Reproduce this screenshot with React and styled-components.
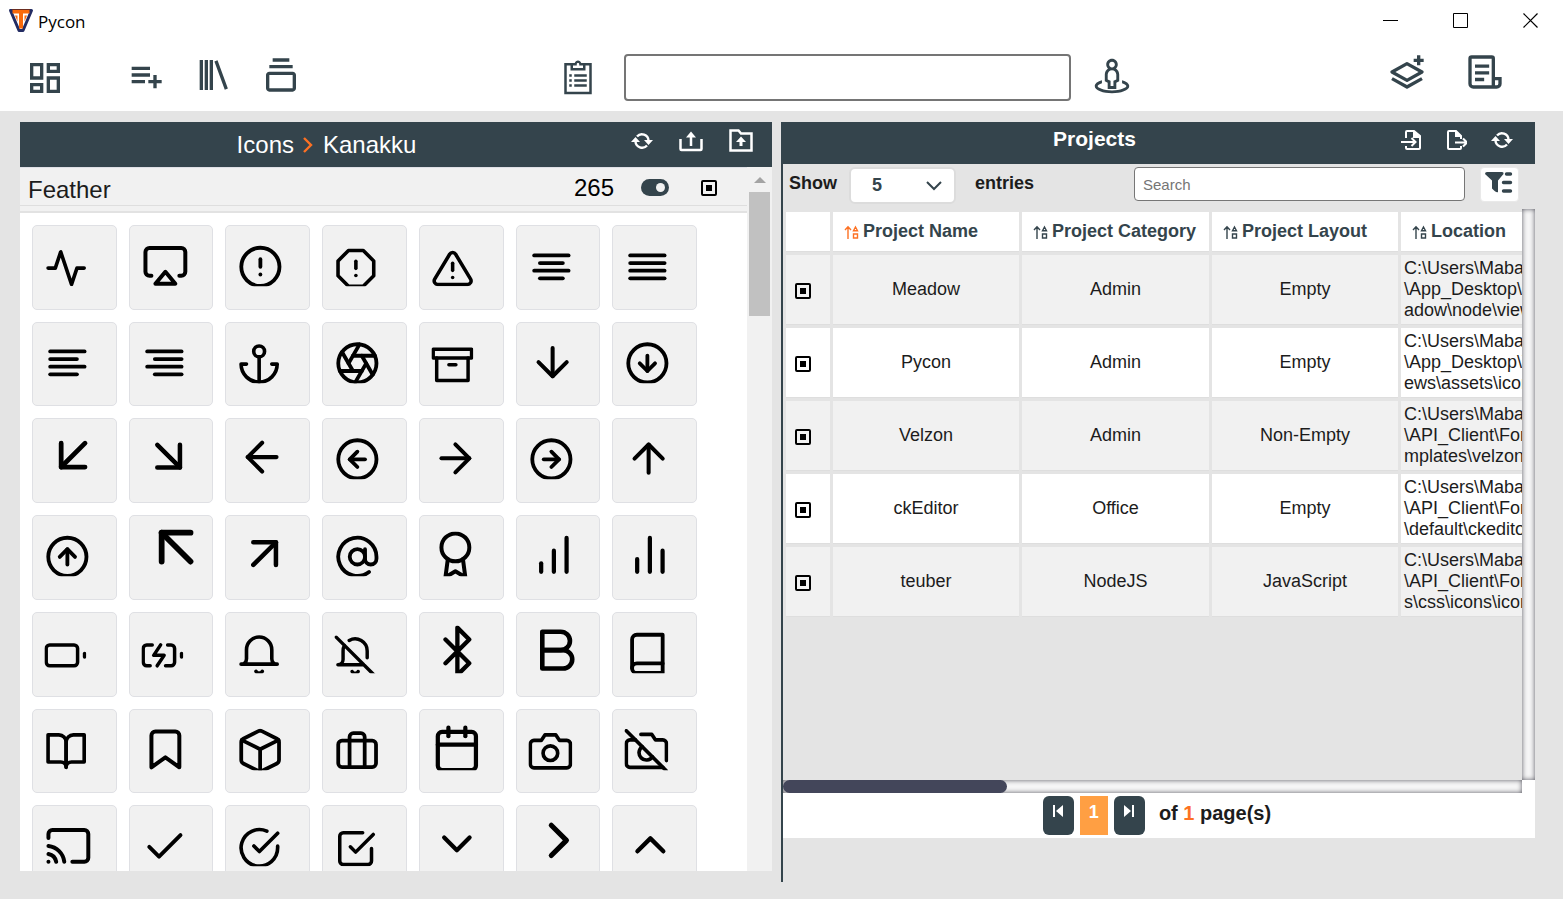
import React from "react";
import styled, { createGlobalStyle } from "styled-components";
import {
  FiActivity, FiAirplay, FiAlertCircle, FiAlertOctagon, FiAlertTriangle, FiAlignCenter, FiAlignJustify,
  FiAlignLeft, FiAlignRight, FiAnchor, FiAperture, FiArchive, FiArrowDown, FiArrowDownCircle,
  FiArrowDownLeft, FiArrowDownRight, FiArrowLeft, FiArrowLeftCircle, FiArrowRight, FiArrowRightCircle, FiArrowUp,
  FiArrowUpCircle, FiArrowUpLeft, FiArrowUpRight, FiAtSign, FiAward, FiBarChart, FiBarChart2,
  FiBattery, FiBatteryCharging, FiBluetooth, FiBold, FiBook,
  FiBookOpen, FiBookmark, FiBriefcase, FiCalendar, FiCamera, FiCameraOff,
  FiCast, FiCheck, FiCheckCircle, FiCheckSquare, FiChevronDown, FiChevronRight, FiChevronUp,
} from "react-icons/fi";
import { BiListPlus, BiLibrary, BiCollection, BiLayerPlus } from "react-icons/bi";
import { MdOutlineDashboard } from "react-icons/md";
import { LiaClipboardListSolid, LiaStreetViewSolid } from "react-icons/lia";

const slate = "#34444c";
const page = "#e4e4e4";
const orange = "#fd7123";

const GlobalStyle = createGlobalStyle`
  *, *::before, *::after { box-sizing: border-box; }
  body {
    margin: 0;
    background: ${page};
    color: #1c1c1c;
    font-family: "Liberation Sans", Arial, sans-serif;
    font-size: 18px;
    line-height: 21px;
  }
  button, input, select { font: inherit; color: inherit; }
  svg { display: block; flex: none; }
`;

const Window = styled.div`
  display: flex;
  flex-direction: column;
  height: 100vh;
  min-width: 1200px;
  min-height: 600px;
  overflow: hidden;
`;

const TitleBar = styled.header`
  display: flex;
  align-items: center;
  height: 42px;
  padding: 0 24px 0 8px;
  gap: 4px;
  background: #fff;
`;

const AppName = styled.span`
  flex: 1;
  font-family: "Open Sans", "Noto Sans", sans-serif;
  font-size: 17px;
  color: #000;
`;

const WindowControls = styled.div`
  display: flex;
  gap: 54px;
`;

const PlainButton = styled.button`
  display: flex;
  padding: 0;
  border: 0;
  background: none;
  color: ${(p) => p.$color || "inherit"};
  cursor: pointer;
`;

const Toolbar = styled.nav`
  display: flex;
  justify-content: space-between;
  align-items: center;
  padding: 10px 58px 8px 25px;
  background: #fff;
  color: ${slate};
`;

const ToolGroup = styled.div`
  display: flex;
  align-items: center;
  gap: ${(p) => p.$gap}px;
  margin-left: ${(p) => p.$indent || 0}px;
  padding-bottom: ${(p) => p.$lift || 0}px;
`;

const CommandInput = styled.input`
  width: 447px;
  height: 47px;
  padding: 0 12px;
  border: 2px solid #757575;
  border-radius: 4px;
  background: #fff;
`;

const Main = styled.main`
  flex: 1;
  min-height: 0;
  display: flex;
  gap: 9px;
  padding: 11px 28px 17px 20px;
`;

const IconsPanel = styled.section`
  flex: 1;
  min-width: 0;
  display: flex;
  flex-direction: column;
  margin-bottom: 11px;
  background: #fff;
`;

const ProjectsPanel = styled.section`
  flex: 1;
  min-width: 0;
  display: flex;
  flex-direction: column;
  padding-bottom: 44px;
  border-left: 2px solid ${slate};
`;

const PanelHeader = styled.div`
  display: flex;
  align-items: flex-start;
  height: ${(p) => p.$height}px;
  padding: 8px ${(p) => p.$right}px 0 ${(p) => p.$left}px;
  background: ${slate};
  color: #fff;
`;

const Breadcrumb = styled.h2`
  flex: 1;
  display: flex;
  justify-content: center;
  align-items: center;
  gap: 8px;
  margin: 0;
  font-size: 24px;
  line-height: 30px;
  font-weight: 400;
`;

const ProjectsTitle = styled.h2`
  flex: 1;
  margin: 0;
  font-size: 21px;
  line-height: 18px;
  text-align: center;
`;

const HeaderActions = styled.div`
  display: flex;
  align-items: center;
  height: ${(p) => p.$height}px;
  gap: ${(p) => p.$gap}px;
`;

const IconsBody = styled.div`
  flex: 1;
  min-height: 0;
  display: flex;
`;

const IconsContent = styled.div`
  flex: 1;
  min-width: 0;
  overflow: hidden;
`;

const SetHeader = styled.div`
  padding-bottom: 5px;
  border-bottom: 2px solid #e2e2e2;
  background: #f1f1f1;
`;

const SetRow = styled.div`
  display: flex;
  align-items: center;
  height: 39px;
  padding: 2px 30px 0 8px;
  border-top: 1px solid #dfe0e6;
  border-bottom: 1px solid #dedede;
  font-size: 24px;
  line-height: 30px;
`;

const SetName = styled.h3`
  flex: 1;
  margin: 0;
  padding-top: 4px;
  font-size: 24px;
  line-height: 30px;
  font-weight: 400;
`;

const SetCount = styled.span`
  margin-right: 27px;
  color: #000;
`;

const Toggle = styled.input`
  appearance: none;
  display: flex;
  align-items: center;
  justify-content: ${(p) => (p.checked || p.defaultChecked ? "flex-end" : "flex-start")};
  width: 28px;
  height: 17px;
  margin: 0 32px 0 0;
  padding: 0 4px;
  border-radius: 9px;
  background: ${slate};
  &::before {
    content: "";
    width: 9px;
    height: 9px;
    border-radius: 50%;
    background: #f1f1f1;
  }
`;

const StopBox = styled.input`
  appearance: none;
  display: grid;
  place-items: center;
  width: 16px;
  height: 16px;
  margin: 0;
  border: 2px solid #000;
  border-radius: 2px;
  &::before {
    content: "";
    width: 6px;
    height: 6px;
    background: #000;
  }
`;

const TileGrid = styled.div`
  display: grid;
  grid-template-columns: repeat(auto-fill, minmax(80px, 1fr));
  gap: 12px;
  padding: 12px 50px 12px 12px;
`;

const Tile = styled.button`
  aspect-ratio: 1;
  padding: 0;
  border: 1px solid #dfe0e4;
  border-radius: 5px;
  background: #f1f1f1;
  color: #000;
  overflow: hidden;
`;

const Gutter = styled.div`
  display: flex;
  flex-direction: column;
  align-items: center;
  gap: 9px;
  width: 25px;
  padding-top: 10px;
  background: #f1f1f1;
`;

const GutterThumb = styled.div`
  width: 21px;
  height: 124px;
  background: #c1c1c1;
`;

const Controls = styled.form`
  display: flex;
  align-items: flex-start;
  height: 45px;
  padding: 3px 16px 0 6px;
`;

const ControlLabel = styled.label`
  margin-right: ${(p) => p.$after}px;
  padding-top: 6px;
  font-weight: 700;
`;

const SelectWrap = styled.div`
  display: grid;
  align-items: center;
  margin-right: 19px;
  color: ${slate};
  & > * { grid-area: 1 / 1; }
  & > svg { justify-self: end; margin-right: 14px; pointer-events: none; }
`;

const EntriesSelect = styled.select`
  appearance: none;
  width: 107px;
  height: 37px;
  padding: 0 36px 1px 21px;
  border: 2px solid #dcdcdc;
  border-radius: 6px;
  background: #fff;
  font-weight: 700;
`;

const SearchInput = styled.input`
  width: 331px;
  height: 34px;
  margin: 0 15px 0 auto;
  padding: 0 8px;
  border: 1px solid #767676;
  border-radius: 4px;
  background: #fff;
  font-size: 15px;
  &::placeholder { color: #757575; opacity: 1; }
`;

const FilterButton = styled.button`
  width: 39px;
  height: 35px;
  padding: 0 4px 4px;
  border: 1px solid #e9e9e9;
  border-radius: 4px;
  background: #fff;
  color: ${slate};
`;

const TableFrame = styled.div`
  flex: 1;
  min-height: 0;
  display: grid;
  grid-template: minmax(0, 1fr) 13px / minmax(0, 1fr) 13px;
  background: #fff;
`;

const TableView = styled.div`
  overflow: hidden;
  background: ${page};
`;

const Track = styled.div`
  background: #f6f6f6;
  box-shadow: inset 0 0 5px #55555f;
`;

const TrackThumb = styled.div`
  width: 30.3%;
  height: 13px;
  border-radius: 7px;
  background: #43465a;
`;

const Table = styled.table`
  table-layout: fixed;
  width: 942px;
  border-spacing: 3px;
`;

const Col = styled.col`
  width: ${(p) => p.$width}px;
`;

const HeadCell = styled.th`
  height: 40px;
  padding: 0 0 0 11px;
  border-bottom: 1px solid #dedede;
  background: #fff;
  color: ${slate};
  text-align: left;
`;

const SortButton = styled(PlainButton)`
  align-items: center;
  gap: 4px;
  font-weight: 700;
  white-space: nowrap;
  & > svg { color: ${(p) => (p.$active ? orange : slate)}; }
`;

const Row = styled.tr`
  background: ${(p) => (p.$striped ? "#f1f1f1" : "#fff")};
`;

const Cell = styled.td`
  height: 70px;
  padding: ${(p) => (p.$path ? "0 3px" : "0")};
  border-bottom: 1px solid #dedede;
  text-align: ${(p) => (p.$path ? "left" : "center")};
  white-space: pre;
`;

const SelectCell = styled(Cell)`
  padding: 2px 0 0 9px;
`;

const Pager = styled.footer`
  display: flex;
  justify-content: center;
  gap: 6px;
  padding: 3px 4px 3px 0;
  background: #fff;
`;

const PagerButton = styled.button`
  display: flex;
  justify-content: center;
  width: ${(p) => (p.$current ? 28 : 31)}px;
  height: 39px;
  padding: ${(p) => (p.$current ? 6 : 9)}px 0 0;
  border: 0;
  border-radius: ${(p) => (p.$current ? 0 : 6)}px;
  background: ${(p) => (p.$current ? "#ff9f43" : slate)};
  color: #fff;
  font-weight: 700;
`;

const PageTotal = styled.span`
  margin-left: 8px;
  font-size: 20px;
  line-height: 34px;
  font-weight: 700;
  & > b { color: ${orange}; }
`;

const featherStroke = {
  viewBox: "0 0 24 24", fill: "none", stroke: "currentColor",
  strokeWidth: 2, strokeLinecap: "round", strokeLinejoin: "round",
};

const Bell = ({ size, ...rest }) => (
  <svg {...featherStroke} width={size} height={size} {...rest}>
    <path d="M22 17H2a3 3 0 0 0 3-3V9a7 7 0 0 1 14 0v5a3 3 0 0 0 3 3zm-8.27 4a2 2 0 0 1-3.46 0" />
  </svg>
);

const BellOff = ({ size, ...rest }) => (
  <svg {...featherStroke} width={size} height={size} {...rest}>
    <path d="M8.56 2.9A7 7 0 0 1 19 9v4m-2 4H2a3 3 0 0 0 3-3V9a7 7 0 0 1 .78-3.22M13.73 21a2 2 0 0 1-3.46 0M1 1l22 22" />
  </svg>
);

const Cube = ({ size, ...rest }) => (
  <svg {...featherStroke} width={size} height={size} {...rest}>
    <path d="M12.89 1.45l8 4A2 2 0 0 1 22 7.24v9.53a2 2 0 0 1-1.11 1.79l-8 4a2 2 0 0 1-1.79 0l-8-4a2 2 0 0 1-1.1-1.8V7.24a2 2 0 0 1 1.11-1.79l8-4a2 2 0 0 1 1.78 0z" />
    <path d="M2.32 6.16L12 11l9.68-4.84M12 22.76V11" />
  </svg>
);

// Each entry: accessible name, glyph, glyph size, distance of the glyph box from the tile top.
const tiles = [
  ["activity", FiActivity, 43.5, 20.5], ["airplay", FiAirplay, 48, 16], ["alert circle", FiAlertCircle, 46, 18],
  ["alert octagon", FiAlertOctagon, 43, 21], ["alert triangle", FiAlertTriangle, 42.5, 21.5],
  ["align center", FiAlignCenter, 46, 18], ["align justify", FiAlignJustify, 46, 18],
  ["align left", FiAlignLeft, 46, 17], ["align right", FiAlignRight, 46, 17], ["anchor", FiAnchor, 43.5, 19.5],
  ["aperture", FiAperture, 46, 17.5], ["archive", FiArchive, 42, 21], ["arrow down", FiArrowDown, 48.5, 15],
  ["arrow down circle", FiArrowDownCircle, 46, 17.5],
  ["arrow down left", FiArrowDownLeft, 57.5, 7.5], ["arrow down right", FiArrowDownRight, 54.5, 10],
  ["arrow left", FiArrowLeft, 49.5, 13.5], ["arrow left circle", FiArrowLeftCircle, 46, 17.5],
  ["arrow right", FiArrowRight, 48, 15.5], ["arrow right circle", FiArrowRightCircle, 46, 17.5],
  ["arrow up", FiArrowUp, 48.5, 15.5],
  ["arrow up circle", FiArrowUpCircle, 46, 18], ["arrow up left", FiArrowUpLeft, 69.5, -3.5],
  ["arrow up right", FiArrowUpRight, 54.5, 10.5], ["at sign", FiAtSign, 46, 18], ["award", FiAward, 48, 15.5],
  ["bar chart", FiBarChart, 51, 13.5], ["bar chart 2", FiBarChart2, 51, 13.5],
  ["battery", FiBattery, 42, 21.5], ["battery charging", FiBatteryCharging, 42, 21.5], ["bell", Bell, 43.5, 20.5],
  ["bell off", BellOff, 41.5, 22.5], ["bluetooth", FiBluetooth, 52, 12.5], ["bold", FiBold, 55.5, 9.5],
  ["book", FiBook, 46, 18],
  ["book open", FiBookOpen, 43.5, 19.5], ["bookmark", FiBookmark, 48, 15.5], ["box", Cube, 45.5, 18.5],
  ["briefcase", FiBriefcase, 45.5, 17.5], ["calendar", FiCalendar, 51, 13.5], ["camera", FiCamera, 44, 19.5],
  ["camera off", FiCameraOff, 44, 19],
  ["cast", FiCast, 48, 16], ["check", FiCheck, 47, 17.5], ["check circle", FiCheckCircle, 44, 20],
  ["check square", FiCheckSquare, 42.5, 21.5], ["chevron down", FiChevronDown, 51, 12.5],
  ["chevron right", FiChevronRight, 61, 4], ["chevron up", FiChevronUp, 52, 13],
];

// The glyph line box ends 61 units down the tile and cuts whatever reaches below it.
const GlyphTile = ({ name, Glyph, size, top }) => (
  <Tile type="button" aria-label={name}>
    <svg viewBox="0 0 83 83" width="100%" height="100%">
      <svg width="83" height="60.5" overflow="hidden">
        <Glyph x={11.5} y={top} size={size} />
      </svg>
    </svg>
  </Tile>
);

const Logo = () => (
  <svg width="26" height="26" viewBox="0 0 26 26">
    <path d="M2.500 2.500h21l-8.500 20h-4z" fill="#fff" stroke="#232c63" strokeWidth="3" strokeLinejoin="round" />
    <path d="M4.500 1.500h17v4H15v15h-4v-15H4.500z" fill="#f96a0c" />
    <path d="M7 7.500h2.500v6zM19 7.500h-2.500v6z" fill="#f96a0c" />
    <path d="M4 1.500h18" stroke="#6b2d20" strokeWidth="1" />
  </svg>
);

const Minimize = () => (
  <svg width="16" height="16"><path d="M0 7.500h15" stroke="#000" /></svg>
);
const Maximize = () => (
  <svg width="16" height="16"><path d="M.5 .5h14v14H.5z" stroke="#000" fill="none" /></svg>
);
const Close = () => (
  <svg width="16" height="16"><path d="M.5 .5l14 14M14.500 .5l-14 14" stroke="#000" strokeWidth="1.200" /></svg>
);

const Sync = () => (
  <svg width="22" height="18" viewBox="0 0 22 18">
    <path d="M4.500 9.500a6.600 6.600 0 0 0 11.500 4M17.500 8.500a6.600 6.600 0 0 0-11.500-4" fill="none" stroke="currentColor" strokeWidth="2.400" />
    <path d="M0 10l4.500-5L9 10zM13 8h9l-4.500 5z" fill="currentColor" />
  </svg>
);

const ScrollSheet = () => (
  <svg width="40" height="40" viewBox="0 0 24 24" fill="none" stroke="currentColor" strokeWidth="2">
    <path d="M17 20.500V4a1 1 0 0 0-1-1H4a1 1 0 0 0-1 1v15a2 2 0 0 0 2 2h14a2 2 0 0 0 2-2v-3h-4" />
    <path d="M6 8.500h8.500M6 12.500h8.500M6 16.500h5.500" />
  </svg>
);

const UploadTray = () => (
  <svg width="24" height="22" viewBox="0 0 24 22">
    <path d="M1.500 9v10a1 1 0 0 0 1 1h19a1 1 0 0 0 1-1V9M12 16V6" fill="none" stroke="currentColor" strokeWidth="2.500" />
    <path d="M12 1.500l5 6H7z" fill="currentColor" />
  </svg>
);

const FolderUp = () => (
  <svg width="24" height="24" viewBox="0 0 24 24">
    <path d="M1.500 1.500h8l2.500 3h10.500v17h-21z" fill="none" stroke="currentColor" strokeWidth="2.500" />
    <path d="M12 7.500l5 5.500h-3.500v4h-3v-4H7z" fill="currentColor" />
  </svg>
);

const FileImport = () => (
  <svg width="20" height="20" viewBox="0 0 20 20" fill="none" stroke="currentColor" strokeWidth="2">
    <path d="M5 8V2a1 1 0 0 1 1-1h7l6 5v12a1 1 0 0 1-1 1H6a1 1 0 0 1-1-1v-2" />
    <path d="M13 1v6h6" fill="currentColor" />
    <path d="M0 12h14M10.500 8l4 4-4 4" />
  </svg>
);

const FileExport = () => (
  <svg width="22" height="20" viewBox="0 0 22 20" fill="none" stroke="currentColor" strokeWidth="2">
    <path d="M16 9V6l-5-5H4a1 1 0 0 0-1 1v16a1 1 0 0 0 1 1h11a1 1 0 0 0 1-1v-2" />
    <path d="M11 1v5h5" fill="currentColor" />
    <path d="M10 12.500h11M18 8.500l4 4-4 4" />
  </svg>
);

const FilterList = () => (
  <svg width="28" height="24" viewBox="0 0 28 24">
    <path d="M0 3q0-2 2-2h15q2 0 1.500 2l-5.500 6.500V21q-2 1-6-3.500V9.500z" fill="currentColor" />
    <path d="M21.500 3h4M18.500 11.500h7M18.500 20h7" stroke="currentColor" strokeWidth="3.400" strokeLinecap="round" />
  </svg>
);

const SortShapes = () => (
  <svg width="15" height="15" viewBox="0 0 15 15" fill="none" stroke="currentColor" strokeWidth="1.400">
    <path d="M4 15V3M1 6l3-3.200L7 6M9.500 10h4v4h-4zM11.500 3l2 3.700h-4z" />
  </svg>
);

const SkipStart = () => (
  <svg width="12" height="12" viewBox="0 0 12 12"><path d="M1 0h2v12H1zM11 0v12L4 6z" fill="currentColor" /></svg>
);
const SkipEnd = () => (
  <svg width="12" height="12" viewBox="0 0 12 12"><path d="M9 0h2v12H9zM1 0v12l7-6z" fill="currentColor" /></svg>
);

const columns = [
  { title: "Project Name", width: 186, active: true },
  { title: "Project Category", width: 187 },
  { title: "Project Layout", width: 186 },
  { title: "Location", width: 321 },
];

const projects = [
  ["Meadow", "Admin", "Empty", "C:\\Users\\Maba\n\\App_Desktop\\Me\nadow\\node\\views"],
  ["Pycon", "Admin", "Empty", "C:\\Users\\Maba\n\\App_Desktop\\Vi\news\\assets\\icons"],
  ["Velzon", "Admin", "Non-Empty", "C:\\Users\\Maba\n\\API_Client\\Form\nmplates\\velzon"],
  ["ckEditor", "Office", "Empty", "C:\\Users\\Maba\n\\API_Client\\Form\n\\default\\ckeditor"],
  ["teuber", "NodeJS", "JavaScript", "C:\\Users\\Maba\n\\API_Client\\Form\ns\\css\\icons\\icons"],
];

const ProjectTable = () => (
  <Table>
    <colgroup>
      <Col $width={44} />
      {columns.map((c) => <Col key={c.title} $width={c.width} />)}
    </colgroup>
    <thead>
      <tr>
        <HeadCell aria-label="Selected" />
        {columns.map((c) => (
          <HeadCell key={c.title}>
            <SortButton type="button" $active={c.active}><SortShapes />{c.title}</SortButton>
          </HeadCell>
        ))}
      </tr>
    </thead>
    <tbody>
      {projects.map(([name, category, layout, location], i) => (
        <Row key={name} $striped={i % 2 === 0}>
          <SelectCell><StopBox type="checkbox" aria-label={`Select ${name}`} /></SelectCell>
          <Cell>{name}</Cell>
          <Cell>{category}</Cell>
          <Cell>{layout}</Cell>
          <Cell $path>{location}</Cell>
        </Row>
      ))}
    </tbody>
  </Table>
);

export default function App() {
  return (
    <Window>
      <GlobalStyle />
      <TitleBar>
        <Logo />
        <AppName>Pycon</AppName>
        <WindowControls>
          <PlainButton aria-label="Minimize"><Minimize /></PlainButton>
          <PlainButton aria-label="Maximize"><Maximize /></PlainButton>
          <PlainButton aria-label="Close"><Close /></PlainButton>
        </WindowControls>
      </TitleBar>

      <Toolbar>
        <ToolGroup $gap={60}>
          <PlainButton aria-label="Dashboard"><MdOutlineDashboard size={40} /></PlainButton>
          <ToolGroup $gap={28} $lift={5}>
            <PlainButton aria-label="Add to list"><BiListPlus size={40} /></PlainButton>
            <PlainButton aria-label="Library"><BiLibrary size={40} /></PlainButton>
            <PlainButton aria-label="Collection"><BiCollection size={40} /></PlainButton>
          </ToolGroup>
        </ToolGroup>
        <ToolGroup $gap={26} $indent={4}>
          <PlainButton aria-label="Clipboard"><LiaClipboardListSolid size={40} /></PlainButton>
          <ToolGroup $gap={18}>
            <CommandInput aria-label="Command" />
            <ToolGroup $lift={4}>
              <PlainButton aria-label="Street view"><LiaStreetViewSolid size={46} /></PlainButton>
            </ToolGroup>
          </ToolGroup>
        </ToolGroup>
        <ToolGroup $gap={38} $lift={11}>
          <PlainButton aria-label="Add layer"><BiLayerPlus size={40} /></PlainButton>
          <PlainButton aria-label="Script"><ScrollSheet /></PlainButton>
        </ToolGroup>
      </Toolbar>

      <Main>
        <IconsPanel>
          <PanelHeader $height={45} $left={2} $right={19}>
            <Breadcrumb>
              <span>Icons</span>
              <svg width="13" height="16" viewBox="0 0 13 16" fill="none" stroke={orange} strokeWidth="2.400">
                <path d="M2 1l7 7-7 7" />
              </svg>
              <span>Kanakku</span>
            </Breadcrumb>
            <HeaderActions $gap={26} $height={22}>
              <PlainButton aria-label="Refresh icons"><Sync /></PlainButton>
              <PlainButton aria-label="Upload icon"><UploadTray /></PlainButton>
              <PlainButton aria-label="Upload folder"><FolderUp /></PlainButton>
            </HeaderActions>
          </PanelHeader>
          <IconsBody>
            <IconsContent>
              <SetHeader>
                <SetRow>
                  <SetName>Feather</SetName>
                  <SetCount>265</SetCount>
                  <Toggle type="checkbox" role="switch" aria-label="Show set" defaultChecked />
                  <StopBox type="checkbox" aria-label="Select set" />
                </SetRow>
              </SetHeader>
              <TileGrid>
                {tiles.map(([name, Glyph, size, top]) => (
                  <GlyphTile key={name} name={name} Glyph={Glyph} size={size} top={top} />
                ))}
              </TileGrid>
            </IconsContent>
            <Gutter>
              <svg width="12" height="6" viewBox="0 0 12 6"><path d="M6 0l6 6H0z" fill="#a3a3a3" /></svg>
              <GutterThumb />
            </Gutter>
          </IconsBody>
        </IconsPanel>

        <ProjectsPanel>
          <PanelHeader $height={42} $left={5} $right={22}>
            <ProjectsTitle>Projects</ProjectsTitle>
            <HeaderActions $gap={24} $height={20}>
              <PlainButton aria-label="Import"><FileImport /></PlainButton>
              <PlainButton aria-label="Export"><FileExport /></PlainButton>
              <PlainButton aria-label="Refresh projects"><Sync /></PlainButton>
            </HeaderActions>
          </PanelHeader>
          <Controls>
            <ControlLabel htmlFor="entries" $after={12}>Show</ControlLabel>
            <SelectWrap>
              <EntriesSelect id="entries" defaultValue="5">
                <option>5</option>
                <option>10</option>
                <option>25</option>
              </EntriesSelect>
              <svg width="16" height="10" viewBox="0 0 16 10" fill="none" stroke="currentColor" strokeWidth="2">
                <path d="M1 1l7 7 7-7" />
              </svg>
            </SelectWrap>
            <ControlLabel htmlFor="entries" $after={0}>entries</ControlLabel>
            <SearchInput type="text" placeholder="Search" aria-label="Search" />
            <FilterButton type="button" aria-label="Filter"><FilterList /></FilterButton>
          </Controls>
          <TableFrame>
            <TableView><ProjectTable /></TableView>
            <Track />
            <Track><TrackThumb /></Track>
          </TableFrame>
          <Pager>
            <PagerButton aria-label="First page"><SkipStart /></PagerButton>
            <PagerButton $current>1</PagerButton>
            <PagerButton aria-label="Last page"><SkipEnd /></PagerButton>
            <PageTotal>of <b>1</b> page(s)</PageTotal>
          </Pager>
        </ProjectsPanel>
      </Main>
    </Window>
  );
}
